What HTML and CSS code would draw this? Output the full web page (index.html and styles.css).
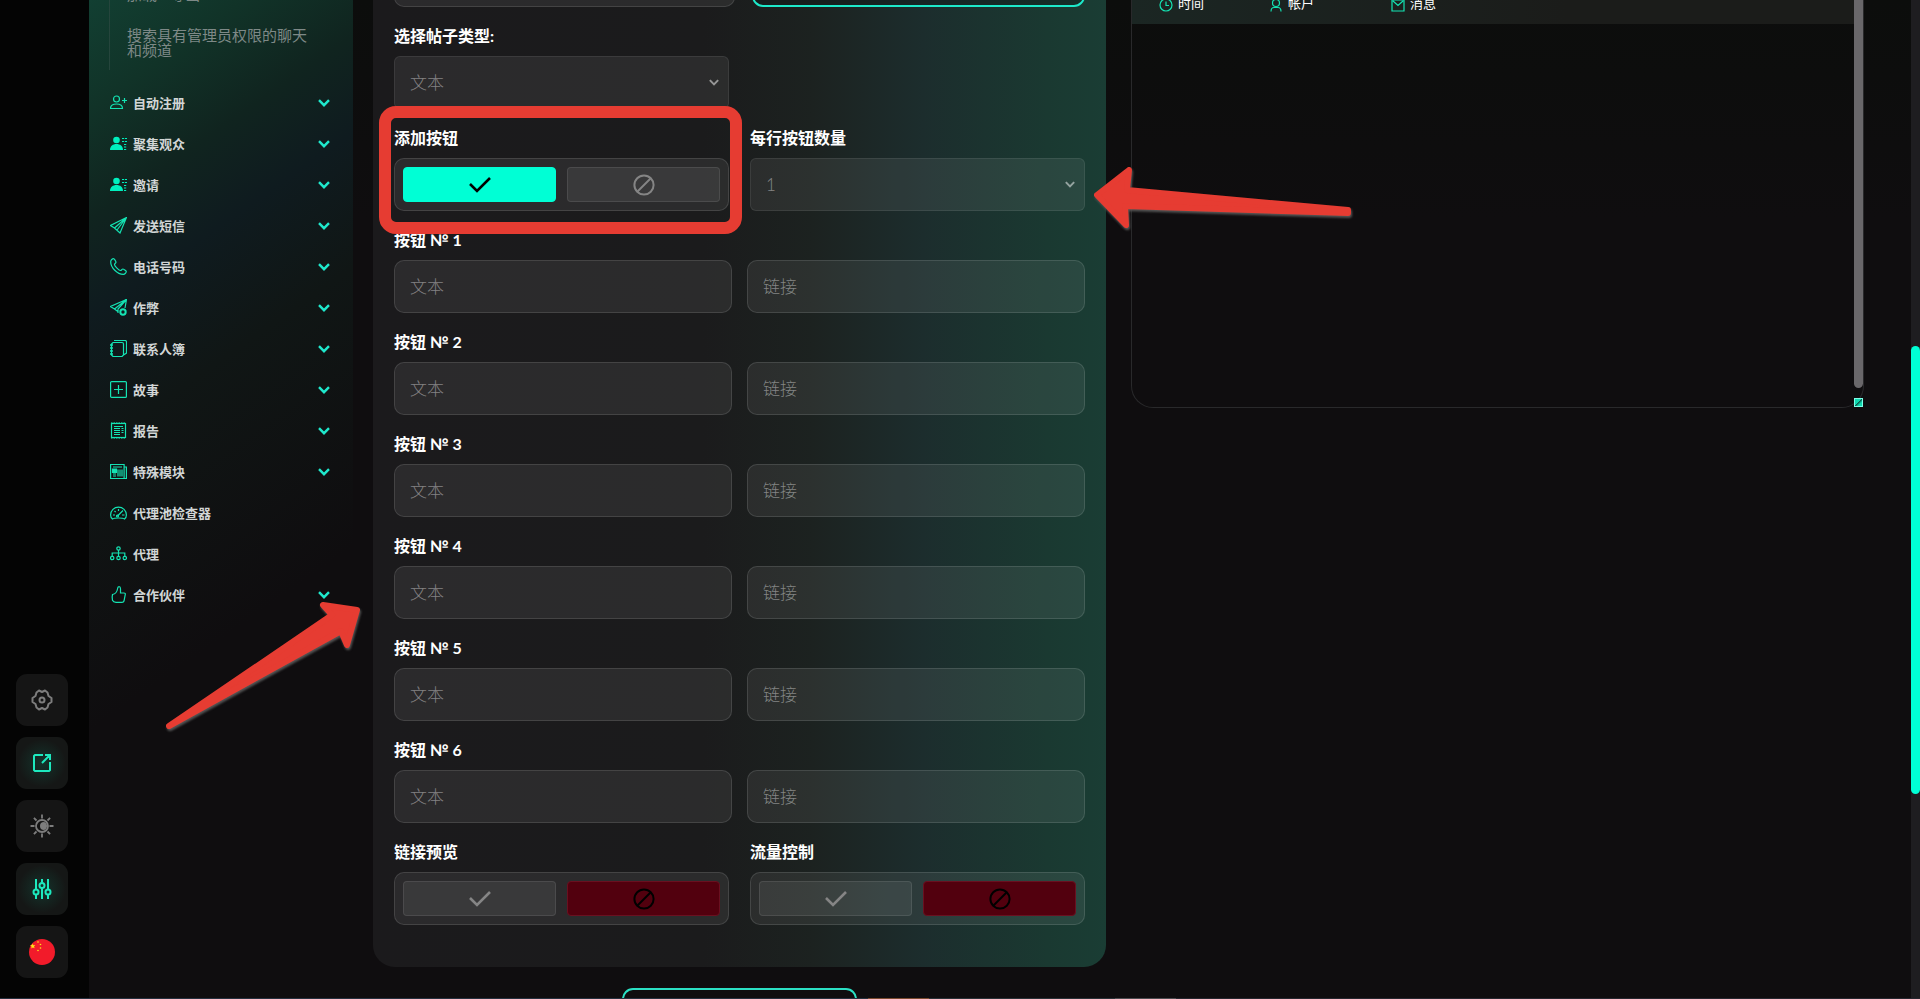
FILE: index.html
```
<!DOCTYPE html>
<html lang="zh">
<head>
    <meta charset="utf-8">
    <title>按钮</title>
    <link rel="stylesheet" href="styles.css">
</head>
<body>
    <!-- shared icons -->
    <svg class="sprite" width="0" height="0">
        <symbol id="chevron" viewBox="0 0 12 8"><path d="M1 1.2l5 5 5-5" fill="none" stroke="currentColor" stroke-width="2.400"/></symbol>
        <symbol id="check" viewBox="0 0 22 16"><path d="M1 7l7 7L21 1" fill="none" stroke="currentColor" stroke-width="2.6"/></symbol>
        <symbol id="ban" viewBox="0 0 22 22"><g fill="none" stroke="currentColor" stroke-width="2"><circle cx="11" cy="11" r="9.6"/><path d="M4.5 17.5l13-13"/></g></symbol>
        <symbol id="contact" viewBox="0 0 17 17"><circle cx="6.5" cy="5" r="3.3" fill="currentColor"/><path d="M0 15c0-4 3-6 6.500-6s6.500 2 6.500 6z" fill="currentColor"/><path d="M12 3.500h5M12 6.500h5M14 9.500h3M14 12h3M14 14.500h3" stroke="currentColor" stroke-dasharray="2.200 .8"/></symbol>
    </svg>

    <div class="layout">
        <div class="rail">
            <button class="rail-button" aria-label="设置">
                <svg width="22" height="22" viewBox="0 0 22 22" fill="none" stroke="currentColor" stroke-width="2" stroke-linejoin="round"><path d="M5.500 3.500L8 1.500l3 1.500 3-1.500 2.500 2L17.500 7l3 2v4l-3 2-1 3.500-2.500 2-3-1.500-3 1.500-2.500-2-1-3.500-3-2V9l3-2z"/><circle cx="11" cy="11" r="2.500"/></svg>
            </button>
            <button class="rail-button active" aria-label="打开">
                <svg width="20" height="20" viewBox="0 0 20 20" fill="none" stroke="currentColor" stroke-width="2"><path d="M11 2H3L2 3v14l1 1h14l1-1V9M10 10l8-8M13 2h5v5"/></svg>
            </button>
            <button class="rail-button" aria-label="主题">
                <svg width="24" height="24" viewBox="0 0 24 24" fill="none" stroke="currentColor" stroke-width="1.800"><circle cx="12" cy="12" r="6"/><path d="M12 .5v4M12 19.500v4M.5 12h4M19.500 12h4M3.900 3.900l2.600 2.600M17.500 17.500l2.600 2.600M3.900 20.100l2.600-2.600M17.500 6.500l2.600-2.600"/><path d="M14 8a4 4 0 1 0 0 8c4-1 4-7 0-8z" fill="currentColor" stroke="none"/></svg>
            </button>
            <button class="rail-button active" aria-label="筛选">
                <svg width="20" height="22" viewBox="0 0 20 22" fill="none" stroke="currentColor" stroke-width="2"><path d="M4 1v10M4 17v4M10 1v3.500M10 10v11M16 1v10M16 17v4"/><circle cx="4" cy="14" r="2.500"/><circle cx="10" cy="7.500" r="2.500"/><circle cx="16" cy="14" r="2.500"/></svg>
            </button>
            <button class="rail-button" aria-label="中文">
                <svg width="26" height="26" viewBox="0 0 26 26"><circle cx="13" cy="13" r="13" fill="#f21b2a"/><g fill="#ffe11a"><path d="M3.500 4.500l.9 1.700 1.900-.1-1.300 1.400.7 1.800-1.800-.8-1.600 1.100.2-2-1.400-1.300 1.900-.3z"/><circle cx="9" cy="3" r=".8"/><circle cx="11.500" cy="5.500" r=".8"/><circle cx="11.500" cy="9" r=".8"/><circle cx="9" cy="11.500" r=".8"/></g></svg>
            </button>
        </div>

        <nav class="sidebar">
            <div class="submenu">
                <a href="#">加载 - 导出</a>
                <a href="#">搜索具有管理员权限的聊天和频道</a>
            </div>
            <ul class="menu">
                <li><a href="#">
                    <svg class="icon" viewBox="0 0 17 17"><circle cx="6.500" cy="5" r="3"/><path d="M.5 14.500c0-3 2.500-4.500 6-4.500s6 1.500 6 4.500zM12 6.500h5M14.500 4v5"/></svg>
                    自动注册<svg class="chevron"><use href="#chevron"/></svg></a></li>
                <li><a href="#">
                    <svg class="icon solid"><use href="#contact"/></svg>
                    聚集观众<svg class="chevron"><use href="#chevron"/></svg></a></li>
                <li><a href="#">
                    <svg class="icon solid"><use href="#contact"/></svg>
                    邀请<svg class="chevron"><use href="#chevron"/></svg></a></li>
                <li><a href="#">
                    <svg class="icon" viewBox="0 0 17 17"><path d="M16.500.5L.5 8.500l4 2.500 5.500 5zM16.500.5L4.500 11M16.500.5L7 13"/></svg>
                    发送短信<svg class="chevron"><use href="#chevron"/></svg></a></li>
                <li><a href="#">
                    <svg class="icon" viewBox="0 0 17 17"><path d="M3.500.7c-1 0-2.800 1.300-2.800 3 0 6 6.600 12.600 12.600 12.600 1.700 0 3-1.800 3-2.800 0-.8-2.800-2.500-3.500-2.500s-1.500 1.500-2.300 1.500C9 12.500 4.500 8 4.500 6.500c0-.8 1.500-1.600 1.500-2.300S4.300.7 3.500.7z"/></svg>
                    电话号码<svg class="chevron"><use href="#chevron"/></svg></a></li>
                <li><a href="#">
                    <svg class="icon" viewBox="0 0 17 17"><path d="M16.500.5L.5 7.500l4 2.500 4 3M16.500.5L15 9M16.500.5L4.500 10M16.500.5L8 10v4"/><circle cx="13" cy="13" r="2.700" stroke-width="2"/></svg>
                    作弊<svg class="chevron"><use href="#chevron"/></svg></a></li>
                <li><a href="#">
                    <svg class="icon" viewBox="0 0 17 17"><path d="M3 2.500h9q1.500 0 1.500 1.500v11l-1.500 1.500H3L1.500 15V4zM4 .5h11q1.500 0 1.500 1.500v11l-3 2"/><path d="M0 5h3M0 8h3M0 11h3M0 14h3" stroke-width="1.300"/></svg>
                    联系人簿<svg class="chevron"><use href="#chevron"/></svg></a></li>
                <li><a href="#">
                    <svg class="icon" viewBox="0 0 17 17"><rect x=".6" y=".6" width="15.800" height="15.800" rx="1"/><path d="M8.500 4v9M4 8.500h9"/></svg>
                    故事<svg class="chevron"><use href="#chevron"/></svg></a></li>
                <li><a href="#">
                    <svg class="icon" viewBox="0 0 17 17"><rect x="1.500" y="1.500" width="14" height="14"/><path d="M1 1h15M1 16h15" stroke-dasharray="1.500 1"/><path d="M4 4.500h9M4 6.500h6M4 8.500h6M4 10.500h6M4 12.500h6M11.500 6.500h2M11.500 8.500h2M11.500 10.500h2"/></svg>
                    报告<svg class="chevron"><use href="#chevron"/></svg></a></li>
                <li><a href="#">
                    <svg class="icon" viewBox="0 0 17 17"><path d="M.6 1.500h13.500v14H.6zM14 4h2.400v11.500h-3M3 4h9M8 6.500v7M10 6.500v7M12 6.500v7M3 11h3M3 13h3"/><path d="M2.500 6h4v3.500h-4z" fill="currentColor"/></svg>
                    特殊模块<svg class="chevron"><use href="#chevron"/></svg></a></li>
                <li><a href="#">
                    <svg class="icon" viewBox="0 0 17 17"><path d="M2.500 15C1 14 .6 12.500.6 11a7.900 7.900 0 0 1 15.800 0c0 1.500-.4 3-1.900 4-1-.8-3-1-6-1s-5 .2-6 1zM8.500 5v2M3 11h2M12 11h2.500M4.500 7l1.200 1.200M7.500 12L13 6.500"/><circle cx="7.500" cy="12" r="1"/></svg>
                    代理池检查器</a></li>
                <li><a href="#">
                    <svg class="icon" viewBox="0 0 17 17"><circle cx="8.500" cy="3.500" r="1.700"/><circle cx="2.200" cy="13" r="1.700"/><circle cx="8.500" cy="13" r="1.700"/><circle cx="14.800" cy="13" r="1.700"/><path d="M8.500 5v6.500M2.200 11V8h12.600v3"/></svg>
                    代理</a></li>
                <li><a href="#">
                    <svg class="icon" viewBox="0 0 17 17"><path d="M2.500 8.500C5 8 7 6 7.500 3c.1-1.500.5-2.300 1.500-2.300s1.500.8 1.500 2V7h3.500c1 0 1.500.8 1.300 1.500L14 15c-.3 1-1 1.300-2 1.300H6c-1.500 0-3-.8-3.500-2-.5-2-.5-4 0-5.800z"/></svg>
                    合作伙伴<svg class="chevron"><use href="#chevron"/></svg></a></li>
            </ul>
        </nav>

        <main class="main">
            <section class="left">
                <form class="card">
                    <div class="top-row">
                        <input class="field" type="text" aria-label="帖子">
                        <button class="outline-button" type="button" aria-label="添加"></button>
                    </div>

                    <div class="row">
                        <div>
                            <label for="type">选择帖子类型:</label>
                            <div class="select-wrap">
                                <select id="type"><option>文本</option></select>
                                <svg class="arrow"><use href="#chevron"/></svg>
                            </div>
                        </div>
                    </div>

                    <div class="row">
                        <div>
                            <span class="label">添加按钮</span>
                            <div class="toggle">
                                <button class="yes" type="button" aria-label="是"><svg class="check"><use href="#check"/></svg></button>
                                <button type="button" aria-label="否"><svg class="ban"><use href="#ban"/></svg></button>
                            </div>
                        </div>
                        <div>
                            <label for="count">每行按钮数量</label>
                            <div class="select-wrap">
                                <select id="count"><option>1</option></select>
                                <svg class="arrow"><use href="#chevron"/></svg>
                            </div>
                        </div>
                    </div>

                    <div class="link-row">
                        <label for="b1">按钮 № 1</label>
                        <input class="field" id="b1" type="text" placeholder="文本">
                        <input class="field" type="text" placeholder="链接" aria-label="链接 1">
                    </div>
                    <div class="link-row">
                        <label for="b2">按钮 № 2</label>
                        <input class="field" id="b2" type="text" placeholder="文本">
                        <input class="field" type="text" placeholder="链接" aria-label="链接 2">
                    </div>
                    <div class="link-row">
                        <label for="b3">按钮 № 3</label>
                        <input class="field" id="b3" type="text" placeholder="文本">
                        <input class="field" type="text" placeholder="链接" aria-label="链接 3">
                    </div>
                    <div class="link-row">
                        <label for="b4">按钮 № 4</label>
                        <input class="field" id="b4" type="text" placeholder="文本">
                        <input class="field" type="text" placeholder="链接" aria-label="链接 4">
                    </div>
                    <div class="link-row">
                        <label for="b5">按钮 № 5</label>
                        <input class="field" id="b5" type="text" placeholder="文本">
                        <input class="field" type="text" placeholder="链接" aria-label="链接 5">
                    </div>
                    <div class="link-row">
                        <label for="b6">按钮 № 6</label>
                        <input class="field" id="b6" type="text" placeholder="文本">
                        <input class="field" type="text" placeholder="链接" aria-label="链接 6">
                    </div>

                    <div class="row">
                        <div>
                            <span class="label">链接预览</span>
                            <div class="toggle">
                                <button type="button" aria-label="是"><svg class="check"><use href="#check"/></svg></button>
                                <button class="no" type="button" aria-label="否"><svg class="ban"><use href="#ban"/></svg></button>
                            </div>
                        </div>
                        <div>
                            <span class="label">流量控制</span>
                            <div class="toggle">
                                <button type="button" aria-label="是"><svg class="check"><use href="#check"/></svg></button>
                                <button class="no" type="button" aria-label="否"><svg class="ban"><use href="#ban"/></svg></button>
                            </div>
                        </div>
                    </div>
                </form>
                <button class="start-button" aria-label="开始"></button>
            </section>

            <section class="log">
                <div class="log-body">
                    <table class="log-table">
                        <tr>
                            <th><svg class="th-icon" viewBox="0 0 14 14"><circle cx="7" cy="7" r="6"/><path d="M7 3.500V7.500h3"/></svg>时间</th>
                            <th><svg class="th-icon" viewBox="0 0 14 14"><circle cx="7" cy="5" r="3.500"/><path d="M2 13.500c0-3 1.500-4 3-4h4c1.500 0 3 1 3 4"/></svg>帐户</th>
                            <th><svg class="th-icon" viewBox="0 0 14 14"><path d="M1 2h12v11H1zM2 3l5 4.500L12 3"/></svg>消息</th>
                        </tr>
                    </table>
                </div>
                <div class="log-side">
                    <div class="log-thumb"></div>
                    <div class="resizer"></div>
                </div>
            </section>
        </main>

        <div class="page-scroll"><div class="page-thumb"></div></div>
    </div>
    <div class="taskbar-edge"></div>

    <div class="highlight"></div>
    <svg class="arrow-right" width="262" height="66" viewBox="1092 165 262 66">
        <path d="M1097 195L1129 170 1127 190 1348 210V213L1125 206 1126 225Z"/>
    </svg>
    <svg class="arrow-left" width="200" height="134" viewBox="163 598 200 134">
        <path d="M169 726L332 615 323 605 357 610 347 645 341 631Z"/>
    </svg>
</body>
</html>
```
FILE: styles.css
```
* {
    box-sizing: border-box;
}

body {
    margin: 0;
    height: 100vh;
    display: flex;
    flex-direction: column;
    background-color: #0f0d0f;
    color: white;
    font-family: Lato, "Noto Sans CJK SC", sans-serif;
    font-size: 16px;
    overflow: hidden;
}

button, input, select {
    font-family: inherit;
    margin: 0;
}

.sprite {
    display: none;
}

.layout {
    flex: 1;
    min-height: 0;
    display: flex;
    overflow: hidden;
}

.taskbar-edge {
    height: 1px;
    background: linear-gradient(90deg, #26303f 868px, #7b4a2f 868px, #7b4a2f 929px, #2a3138 929px, #2a3138 1115px, #4b4b50 1115px, #4b4b50 1176px, #26262f 1176px);
}

/* icon rail */

.rail {
    width: 89px;
    flex-shrink: 0;
    background-color: #040404;
    padding: 0 16px 20px;
    display: flex;
    flex-direction: column;
    justify-content: flex-end;
    gap: 11px;
}

.rail-button {
    width: 52px;
    height: 52px;
    padding: 0;
    border: none;
    border-radius: 11px;
    background-color: #151515;
    color: #7d7d7d;
    display: flex;
    align-items: center;
    justify-content: center;
}

.rail-button.active {
    color: #1de9be;
    background: radial-gradient(circle, #14332b, #151716 65%);
}

/* sidebar */

.sidebar {
    width: 264px;
    flex-shrink: 0;
    padding: 0 20px;
    background: linear-gradient(145deg, #123f32 0, #113328 90px, #10241f 180px, #0f1b1f 260px, #101615 370px, #0f0d0f 600px);
}

.submenu {
    height: 70px;
    margin-bottom: 12px;
    padding: 0 19px 12px 17px;
    border-left: 1px solid #25453c;
    display: flex;
    flex-direction: column;
    justify-content: flex-end;
    gap: 26px;
}

.submenu a {
    color: #7e8987;
    font-size: 15px;
    line-height: 15px;
    text-decoration: none;
}

.menu {
    list-style-type: none;
    padding: 0;
    margin: 0;
}

.menu a {
    height: 41px;
    display: flex;
    align-items: center;
    gap: 6px;
    padding: 0 3px 0 1px;
    color: #d2d6d6;
    font-size: 13px;
    font-weight: bold;
    text-decoration: none;
}

.icon {
    width: 17px;
    height: 17px;
    fill: none;
    stroke: #14e3b3;
    color: #14e3b3;
    stroke-width: 1.2;
}

.icon.solid {
    color: #00f0be;
    stroke: none;
}

.chevron {
    width: 12px;
    height: 8px;
    margin-left: auto;
    color: #1fe8cc;
}

/* main */

.main {
    flex: 1;
    display: grid;
    grid-template-columns: 1fr 1fr;
    gap: 25px;
    align-items: start;
    padding: 0 47px 0 20px;
    background: linear-gradient(#0c0d0c, #0f0d0f 220px);
}

.card {
    padding: 0 21px 42px;
    border-radius: 0 0 22px 22px;
    background: linear-gradient(90deg, #1b1a1c 0, #1b1b1c 45%, #1c2220 60%, #1c2d2d 75%, #1a3931 92%, #1a3d34 100%);
}

/* only the lower edge of this row is in view */
.top-row {
    height: 7px;
    display: grid;
    grid-template-columns: 41fr 40fr;
    grid-template-rows: 100%;
    gap: 17px;
    align-items: end;
}

.outline-button {
    height: 54px;
    border: 2px solid #1de9ca;
    border-radius: 11px;
    background-color: rgba(15, 25, 25, 0.4);
}

.row {
    display: grid;
    grid-template-columns: 1fr 1fr;
    gap: 21px;
}

.link-row {
    display: grid;
    grid-template-columns: 1fr 1fr;
    column-gap: 15px;
}

.link-row label {
    grid-column: span 2;
}

label, .label {
    display: block;
    height: 49px;
    padding-top: 17px;
    line-height: 24px;
    font-weight: bold;
}

.field {
    height: 53px;
    min-width: 0;
    padding: 0 15px;
    border: 1px solid rgba(255, 255, 255, 0.12);
    border-radius: 10px;
    background-color: rgba(255, 255, 255, 0.07);
    color: #8b8b8b;
    font-size: 17px;
    font-weight: 300;
}

.field::placeholder {
    color: rgba(255, 255, 255, 0.42);
}

.select-wrap {
    display: grid;
    align-items: center;
}

.select-wrap select, .select-wrap .arrow {
    grid-area: 1 / 1;
}

.select-wrap select {
    appearance: none;
    height: 53px;
    padding: 0 15px;
    border: 1px solid rgba(255, 255, 255, 0.08);
    border-radius: 6px;
    background-color: rgba(255, 255, 255, 0.07);
    color: rgba(255, 255, 255, 0.42);
    font-size: 17px;
    font-weight: 300;
}

.arrow {
    width: 10px;
    height: 7px;
    margin-right: 10px;
    justify-self: end;
    color: rgba(255, 255, 255, 0.5);
}

.toggle {
    height: 53px;
    padding: 8px;
    display: grid;
    grid-template-columns: 1fr 1fr;
    gap: 11px;
    border: 1px solid rgba(255, 255, 255, 0.12);
    border-radius: 10px;
    background-color: rgba(255, 255, 255, 0.07);
}

.toggle button {
    padding: 0;
    border: 1px solid rgba(255, 255, 255, 0.09);
    border-radius: 4px;
    background-color: rgba(255, 255, 255, 0.07);
    color: #858585;
    display: flex;
    align-items: center;
    justify-content: center;
}

.toggle .yes {
    background-color: #00ffd5;
    border-color: #00ffd5;
    color: black;
}

.toggle .no {
    background-color: #52000e;
    border-color: #6a1020;
    color: black;
}

.check {
    width: 22px;
    height: 16px;
}

.ban {
    width: 22px;
    height: 22px;
}

.start-button {
    display: block;
    width: 235px;
    height: 54px;
    margin: 21px auto 0;
    border: 2px solid #2be0c4;
    border-radius: 11px;
    background-color: transparent;
}

/* log */

.log {
    height: 408px;
    display: flex;
    border: 1px solid #29292b;
    border-top: none;
    border-radius: 0 0 22px 22px;
}

.log-body {
    flex: 1;
}

.log-table {
    width: 100%;
    border-collapse: collapse;
    background: linear-gradient(90deg, #1b2623, #1b1c1a 60%);
}

.log-table th {
    height: 23px;
    padding: 0 0 16px 27px;
    line-height: 7px;
    text-align: left;
    font-size: 13px;
    font-weight: normal;
}

.log-table th:first-child {
    width: 110px;
}

.log-table th:nth-child(2) {
    width: 122px;
}

.th-icon {
    width: 14px;
    height: 14px;
    margin: -4px 5px -4px 0;
    vertical-align: middle;
    fill: none;
    stroke: #14e3b3;
    stroke-width: 1.2;
}

.log-side {
    width: 9px;
    display: flex;
    flex-direction: column;
    justify-content: space-between;
}

.log-thumb {
    height: 388px;
    border-radius: 0 0 5px 5px;
    background-color: #69676a;
}

.resizer {
    height: 9px;
    border: 1px solid #7dffe8;
    background: linear-gradient(135deg, #10d9b0 50%, #0b5a4c 50%, #10d9b0 70%);
}

.page-scroll {
    width: 9px;
    padding-top: 346px;
    background-color: #1e1d20;
}

.page-thumb {
    height: 448px;
    border-radius: 5px;
    background-color: #00ffd5;
}

/* annotations over the page */

.highlight {
    position: absolute;
    left: 379px;
    top: 106px;
    width: 363px;
    height: 128px;
    border: 12px solid #e63c32;
    border-radius: 17px;
}

.arrow-right, .arrow-left {
    position: absolute;
    fill: #e63c32;
    stroke: #e63c32;
    stroke-width: 6;
    stroke-linejoin: round;
    filter: drop-shadow(1px 2px 1px #555);
}

.arrow-right {
    left: 1092px;
    top: 165px;
}

.arrow-left {
    left: 163px;
    top: 598px;
}
```
